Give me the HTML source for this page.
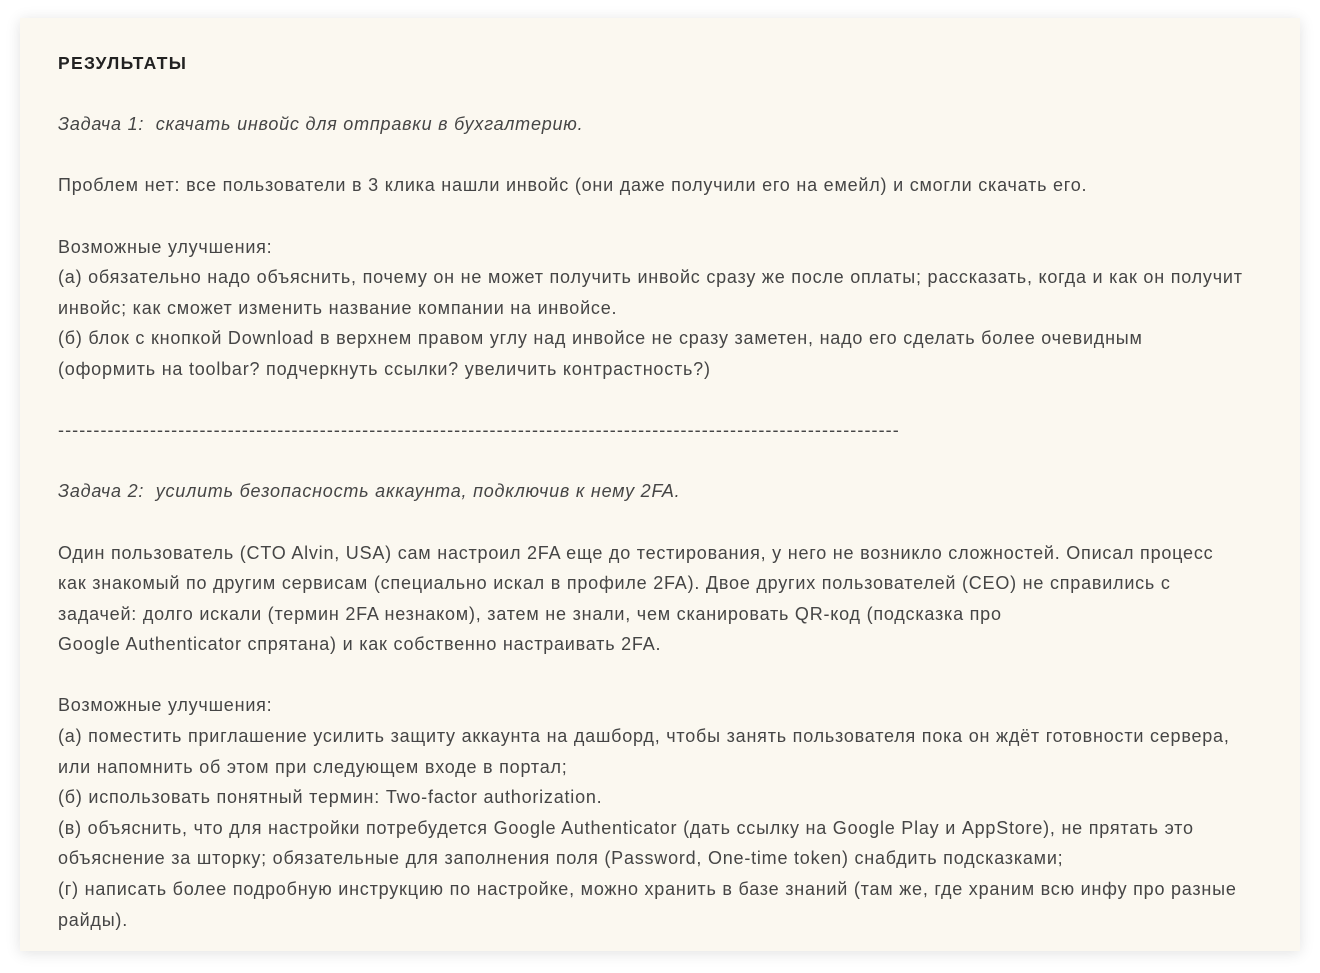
<!DOCTYPE html>
<html><head><meta charset="utf-8"><style>
html,body{margin:0;padding:0;background:#fff;width:1320px;height:973px;overflow:hidden}
.card{position:absolute;left:20px;top:18px;width:1280px;height:933px;background:#fbf8f0;box-shadow:0 2px 14px rgba(0,0,0,0.12)}
.t{position:absolute;left:38px;top:30px;font-family:"Liberation Sans",Arial,sans-serif;font-size:18px;letter-spacing:0.78px;line-height:30.6px;color:#454545;white-space:pre}
b{color:#222;font-size:17.5px;letter-spacing:1.3px}
i{font-style:italic}
.d{letter-spacing:1.08px}
</style></head><body><div class="card"><div class="t"><b>РЕЗУЛЬТАТЫ</b>

<i>Задача 1:  скачать инвойс для отправки в бухгалтерию.</i>

Проблем нет: все пользователи в 3 клика нашли инвойс (они даже получили его на емейл) и смогли скачать его.

Возможные улучшения:
(а) обязательно надо объяснить, почему он не может получить инвойс сразу же после оплаты; рассказать, когда и как он получит
инвойс; как сможет изменить название компании на инвойсе.
(б) блок с кнопкой Download в верхнем правом углу над инвойсе не сразу заметен, надо его сделать более очевидным
(оформить на toolbar? подчеркнуть ссылки? увеличить контрастность?)

<span class="d">-----------------------------------------------------------------------------------------------------------------------</span>

<i>Задача 2:  усилить безопасность аккаунта, подключив к нему 2FA.</i>

Один пользователь (CTO Alvin, USA) сам настроил 2FA еще до тестирования, у него не возникло сложностей. Описал процесс
как знакомый по другим сервисам (специально искал в профиле 2FA). Двое других пользователей (CEO) не справились с
задачей: долго искали (термин 2FA незнаком), затем не знали, чем сканировать QR-код (подсказка про
Google Authenticator спрятана) и как собственно настраивать 2FA.

Возможные улучшения:
(а) поместить приглашение усилить защиту аккаунта на дашборд, чтобы занять пользователя пока он ждёт готовности сервера,
или напомнить об этом при следующем входе в портал;
(б) использовать понятный термин: Two-factor authorization.
(в) объяснить, что для настройки потребудется Google Authenticator (дать ссылку на Google Play и AppStore), не прятать это
объяснение за шторку; обязательные для заполнения поля (Password, One-time token) снабдить подсказками;
(г) написать более подробную инструкцию по настройке, можно хранить в базе знаний (там же, где храним всю инфу про разные
райды).</div></div></body></html>
